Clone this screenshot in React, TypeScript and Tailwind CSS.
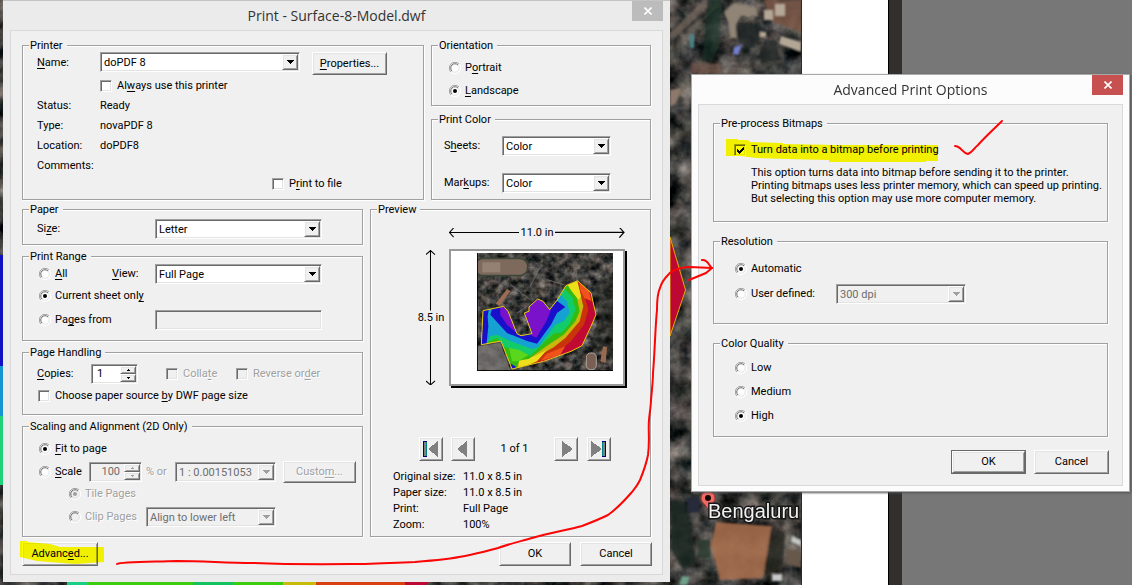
import type { ReactNode } from 'react';
import clsx from 'clsx';

const sunken =
  'border border-t-[#a0a0a0] border-l-[#a0a0a0] border-r-white border-b-white shadow-[inset_1px_1px_0_#696969,inset_-1px_-1px_0_#e3e3e3]';
const raised =
  'border border-t-white border-l-white border-r-[#696969] border-b-[#696969] shadow-[inset_1px_1px_0_#e3e3e3,inset_-1px_-1px_0_#a0a0a0] bg-[#f0f0f0]';
const dimmed = 'text-[#a0a0a0] [text-shadow:1px_1px_0_#fff]';

function Group({ title, className, children }: { title: string; className?: string; children: ReactNode }) {
  return (
    <fieldset className="min-w-0 border border-[#a0a0a0] pl-1.5 shadow-[1px_1px_0_#fff,inset_1px_1px_0_#fff]">
      <legend className="bg-[#f0f0f0] pr-1 pl-px leading-[13px]">{title}</legend>
      <div className={className}>{children}</div>
    </fieldset>
  );
}

interface SelectProps {
  id: string;
  value: string;
  className?: string;
  disabled?: boolean;
  label?: string;
}

function Select({ id, value, className, disabled, label }: SelectProps) {
  return (
    <div className={clsx('relative h-5 shrink-0', className)}>
      <select
        id={id}
        aria-label={label}
        disabled={disabled}
        className={clsx(
          'block h-full w-full appearance-none pt-px pr-5 pl-[3px] opacity-100',
          sunken,
          disabled ? 'bg-[#f0f0f0] text-[#6d6d6d]' : 'bg-white text-black',
        )}
      >
        <option>{value}</option>
      </select>
      <span
        className={clsx('pointer-events-none absolute top-0.5 right-0.5 bottom-0.5 flex w-4 items-center justify-center', raised)}
      >
        <svg width="7" height="4" viewBox="0 0 7 4" shapeRendering="crispEdges">
          <path d="M0 0h7v1h-1v1h-1v1h-1v1h-1v-1h-1v-1h-1v-1h-1z" fill={disabled ? '#a0a0a0' : '#000'} />
        </svg>
      </span>
    </div>
  );
}

interface OptionProps {
  name?: string;
  checked?: boolean;
  disabled?: boolean;
  className?: string;
  children: ReactNode;
}

function Radio({ name, checked, disabled, className, children }: OptionProps) {
  return (
    <label className={clsx('flex items-center gap-1 whitespace-nowrap', disabled && dimmed, className)}>
      <span className="relative block size-3 shrink-0">
        <input
          type="radio"
          name={name}
          defaultChecked={checked}
          disabled={disabled}
          className="block size-3 appearance-none"
        />
        <svg className="pointer-events-none absolute inset-0" width="12" height="12" viewBox="0 0 12 12" fill="none">
          <circle cx="6" cy="6" r="5" fill={disabled ? '#f0f0f0' : '#fff'} />
          <path d="M10 2A5.6 5.6 0 0 1 2 10" stroke="#fff" />
          <path d="M9 3A4.2 4.2 0 0 1 3 9" stroke="#e3e3e3" />
          <path d="M2 10A5.6 5.6 0 0 1 10 2" stroke="#a0a0a0" />
          <path d="M3 9A4.2 4.2 0 0 1 9 3" stroke="#696969" />
          {checked && <circle cx="6" cy="6" r="2" fill={disabled ? '#a0a0a0' : '#000'} />}
        </svg>
      </span>
      <span>{children}</span>
    </label>
  );
}

function Checkbox({ checked, disabled, className, children }: OptionProps) {
  return (
    <label className={clsx('flex items-center gap-[5px] whitespace-nowrap', disabled && dimmed, className)}>
      <span className="relative block size-3 shrink-0">
        <input
          type="checkbox"
          defaultChecked={checked}
          disabled={disabled}
          className={clsx('block size-3 appearance-none', sunken, disabled ? 'bg-[#f0f0f0]' : 'bg-white')}
        />
        {checked && (
          <svg className="pointer-events-none absolute inset-0" width="12" height="12" viewBox="0 0 12 12" shapeRendering="crispEdges">
            <path d="M3 5v3h1v1h1v1h1v-1h1v-1h1v-1h1v-1h1v-3h-1v1h-1v1h-1v1h-1v1h-1v-1h-1v-1z" fill="#000" />
          </svg>
        )}
      </span>
      <span>{children}</span>
    </label>
  );
}

interface ButtonProps {
  className?: string;
  disabled?: boolean;
  label?: string;
  children: ReactNode;
}

function Button({ className, disabled, label, children }: ButtonProps) {
  return (
    <button
      type="button"
      disabled={disabled}
      aria-label={label}
      className={clsx('flex items-center justify-center', raised, disabled && dimmed, className)}
    >
      {children}
    </button>
  );
}

interface SpinnerProps {
  id: string;
  value: string;
  width: string;
  disabled?: boolean;
  label?: string;
}

function Spinner({ id, value, width, disabled, label }: SpinnerProps) {
  const color = disabled ? '#a0a0a0' : '#000';
  return (
    <div className={clsx('flex h-5 shrink-0 p-px', sunken, width, disabled ? 'bg-[#f0f0f0]' : 'bg-white')}>
      <input
        id={id}
        aria-label={label}
        defaultValue={value}
        disabled={disabled}
        className={clsx('w-0 flex-1 bg-transparent', disabled ? 'pr-1 text-right text-[#6d6d6d]' : 'pl-1')}
      />
      <div className="flex w-4 flex-col">
        {['M2 3h1v-1h1v1h1v1h-3z', 'M2 2h3v1h-1v1h-1v-1h-1z'].map((d) => (
          <span key={d} className={clsx('flex h-2 items-center justify-center', raised)}>
            <svg width="7" height="6" viewBox="0 0 7 6" shapeRendering="crispEdges">
              <path d={d} fill={color} />
            </svg>
          </span>
        ))}
      </div>
    </div>
  );
}

function CloseIcon() {
  return (
    <svg width="8" height="8" viewBox="0 0 8 8" stroke="#fff" strokeWidth="1.6">
      <path d="M0.5 0.5 7.5 7.5M7.5 0.5 0.5 7.5" />
    </svg>
  );
}

function AerialFilter({ id, frequency }: { id: string; frequency: number }) {
  return (
    <filter id={id} x="0" y="0" width="100%" height="100%" colorInterpolationFilters="sRGB">
      <feTurbulence type="fractalNoise" baseFrequency={frequency} numOctaves="4" seed="11" />
      <feColorMatrix values=".8 .2 0 0 -.25  .7 .25 0 0 -.23  .65 .25 .05 0 -.24  0 0 0 0 1" />
    </filter>
  );
}

// Satellite picture with the coloured surface, seen behind the dialogs
function MapBackground() {
  return (
    <svg className="h-full w-[802px] shrink-0" width="802" height="585" viewBox="0 0 802 585" preserveAspectRatio="xMinYMin slice">
      <defs>
        <AerialFilter id="aerial" frequency={0.05} />
        <filter id="soft">
          <feGaussianBlur stdDeviation="1" />
        </filter>
      </defs>
      <rect width="802" height="585" filter="url(#aerial)" />
      <g filter="url(#soft)">
        <path d="M670 38 705 4" stroke="#75685f" strokeWidth="7" opacity=".7" />
        <path d="M676 46 716 6" stroke="#6c615a" strokeWidth="2" opacity=".6" />
        <path d="M708 0h14l-2 40-6 20h-12z" fill="#1d3526" opacity=".7" />
        <path d="M724 12 734 3 756 8 758 16 742 15 736 24 737 38 730 38 728 22z" fill="#8f8475" />
        <path d="M738 24h18l8 10-10 12-16-2z" fill="#23282b" opacity=".7" />
        <path d="M764 0h38v32l-30-10z" fill="#7d5646" opacity=".8" />
        <path d="M764 10h9v10h-9zM775 4h10v12h-10zM781 36 801 42v10l-22-8zM760 32h6v5h-6z" fill="#b5a796" />
        <path d="M764 40h12l4 20-20 4z" fill="#1f2524" opacity=".8" />
        <path d="M734 47 742 45 738 55 733 54z" fill="#7480cf" />
        <path d="M690 34h4v14h-4z" fill="#4b8389" />
        <path d="M692 62 720 64 722 74H690z" fill="#79594d" opacity=".6" />
        <path d="M670 90 682 88 676 104 670 106z" fill="#8d7a6c" />
        <path d="M671 500 688 505 696 560 684 570 671 550z" fill="#1b2722" opacity=".8" />
        <path d="M687 498 699 497 700 512 688 513z" fill="#272c3a" />
        <path d="M716 522 772 526 763 578 720 580 711 545z" fill="#a56d4c" opacity=".9" />
        <path d="M771 528 785 532 782 570 764 576z" fill="#272520" opacity=".8" />
        <path d="M792 536 801 540v6l-10-4zM772 574h10v7h-10z" fill="#c5c8c6" />
        <path d="M786 548 801 552v16l-14-4z" fill="#66584c" />
        <path d="M682 576 690 577 687 585h-8z" fill="#6fa08b" />
        <path d="M698 540h12l1 18h-14z" fill="#24372d" opacity=".8" />
      </g>
      <path d="M670 237 685.5 290 670 336z" fill="#bd0834" stroke="#e2ac00" />
      <path d="M0 255h4v111H0z" fill="#1210c4" />
      <path d="M0 366h4v50H0z" fill="#1295d0" />
      <path d="M0 416h4v69H0z" fill="#1ed27a" />
      <g>
        <path d="M67 580h21v5H67z" fill="#18cf83" />
        <path d="M88 580h195v5H88z" fill="#3bcb0f" />
        <path d="M193 580h40v5h-40z" fill="#12c25f" />
        <path d="M283 580h33v5h-33z" fill="#c9bb0a" />
        <path d="M316 580h89v5h-89z" fill="#d8410f" />
        <path d="M405 580h27l-6 5h-21z" fill="#bd0834" />
      </g>
      <path d="M801.5 0V585" stroke="#5d1518" />
      <g>
        <path d="M708 510C706 504 701 503 701 498A7 7 0 0 1 715 498C715 503 710 504 708 510z" fill="#ef6a63" stroke="#a02c2a" />
        <circle cx="708" cy="498" r="3" fill="#1a0606" />
      </g>
      <text
        x="708"
        y="518"
        fill="#f2f2f2"
        stroke="#161616"
        strokeWidth="3"
        paintOrder="stroke"
        className='font-["Liberation_Sans",sans-serif] text-[20px]'
      >
        Bengaluru
      </text>
    </svg>
  );
}

function PreviewPicture() {
  const outline =
    'M108 193 170 180 183 195 210 262 222 268 255 262 232 200 246 195 246 182 272 158 288 165 308 190 330 162 357 118 392 103 432 140 447 205 432 240 405 298 372 315 290 345 195 368 162 284 103 295z';
  return (
    <svg width="136" height="118" viewBox="90 20 408 354" preserveAspectRatio="none">
      <defs>
        <AerialFilter id="aerial-small" frequency={0.04} />
        <clipPath id="surface">
          <path d={outline} />
        </clipPath>
      </defs>
      <rect x="90" y="20" width="408" height="354" filter="url(#aerial-small)" />
      <path d="M90 300 160 290 190 372H90z" fill="#7b7876" opacity=".75" />
      <rect x="84" y="36" width="158" height="52" rx="24" fill="#7d6a5d" stroke="#3c4639" strokeWidth="5" />
      <path d="M106 48h54v30h-54z" fill="#a08c7d" opacity=".7" />
      <path d="M180 128 190 134 158 178 146 172z" fill="#9a6d54" />
      <path d="M190 115 250 160M280 60 250 120M300 100 350 115M210 200 240 180" stroke="#85807a" strokeWidth="3" opacity=".6" />
      <path d="M440 110 498 90V330L430 300 455 210z" fill="#1b1e1b" opacity=".45" />
      <rect x="418" y="320" width="30" height="50" rx="13" fill="#7a5f54" stroke="#aaa49a" strokeWidth="3" />
      <path d="M468 300 480 302 476 350 460 345z" fill="#9a6a4e" />
      <g clipPath="url(#surface)">
        <path d="M90 90H460V380H90z" fill="#c00a33" />
        <path d="M396 95 412 145 424 190 411 235 372 285 335 315 265 350 90 400V90z" fill="#c93508" />
        <path d="M396 95 425 130 434 165 412 155 400 130zM300 322 355 300 340 325 280 345z" fill="#f0521c" />
        <path d="M388 95 398 135 409 180 398 225 355 275 320 303 262 335 215 370 90 400V90z" fill="#c9b70e" />
        <path d="M372 95 391 105 402 150 396 160 370 140 360 115zM215 345 262 330 300 310 270 345 215 368z" fill="#ecdf1c" />
        <path d="M358 110 374 135 390 155 398 195 385 225 350 265 300 298 245 338 217 342 205 380 90 400V90z" fill="#35bb0e" />
        <path d="M185 300 220 310 245 325 215 345 195 345z" fill="#5ad61c" />
        <path d="M350 125 376 152 386 190 368 232 345 258 320 262 300 280 250 328 215 310 185 305 168 300 150 275 90 300V90z" fill="#12cb6b" />
        <path d="M340 145 360 165 368 200 350 225 325 235 275 302 255 308 200 288 150 265 130 270 115 300 90 300V90z" fill="#15a2d2" />
        <path d="M325 160 355 182 330 200 312 235 270 292 240 284 180 260 145 222 130 205 140 170 270 90z" fill="#1a10cc" />
        <path d="M90 180 126 185 122 210 124 240 118 300H90zM180 345 208 362 195 375z" fill="#1a10cc" />
        <path d="M225 200 246 150 290 150 312 190 298 225 268 274 255 268z" fill="#7a12cc" />
        <path d="M160 178 175 178 190 210 212 262 180 235 160 205z" fill="#7a12cc" />
      </g>
      <path d={outline} fill="none" stroke="#e8c713" strokeWidth="3" />
      <path d="M91 20V373H498" fill="none" stroke="#000" strokeWidth="3" />
    </svg>
  );
}

function NavButton({ label, kind }: { label: string; kind: 'first' | 'previous' | 'next' | 'last' }) {
  return (
    <Button label={label} className="size-6">
      <svg width="18" height="18" viewBox="0 0 18 18" shapeRendering="crispEdges">
        {kind === 'first' && (
          <>
            <path d="M1 1h4v16H1z" fill="#000080" />
            <path d="M2 2h2v14H2z" fill="#808080" />
            <path d="M4 2h1v14H4z" fill="#008080" />
            <path d="M16 1V17L6 9z" fill="#808080" />
          </>
        )}
        {kind === 'previous' && <path d="M13 1V17L3 9z" fill="#808080" />}
        {kind === 'next' && <path d="M5 1V17L16 9z" fill="#808080" />}
        {kind === 'last' && (
          <>
            <path d="M1 1V17L12 9z" fill="#808080" />
            <path d="M12 1h4v16h-4z" fill="#000080" />
            <path d="M13 2h2v14h-2z" fill="#808080" />
            <path d="M12 2h1v14h-1z" fill="#008080" />
          </>
        )}
      </svg>
    </Button>
  );
}

function Preview() {
  const info = [
    ['Original size:', '11.0 x 8.5 in'],
    ['Paper size:', '11.0 x 8.5 in'],
    ['Print:', 'Full Page'],
    ['Zoom:', '100%'],
  ];

  return (
    <div className="pt-[9px] pl-[34px]">
      <div className="grid grid-cols-[32px_180px]">
        <div />
        <div className="mb-2 flex h-4 w-[176px] items-center">
          <svg className="flex-1" width="68" height="10" viewBox="0 0 68 10" preserveAspectRatio="xMinYMid slice" fill="none" stroke="#000">
            <path d="M0 4.5H200M4.5 0 0.5 4.5 4.5 9" />
          </svg>
          <span className="px-0.5">11.0 in</span>
          <svg className="flex-1" width="60" height="10" viewBox="0 0 60 10" preserveAspectRatio="xMaxYMid slice" fill="none" stroke="#000">
            <path d="M-100 4.5H60M55.5 0 59.5 4.5 55.5 9" />
          </svg>
        </div>
        <div className="flex w-[28px] flex-col items-center py-px">
          <svg className="flex-1" width="10" height="60" viewBox="0 0 10 60" preserveAspectRatio="xMidYMin slice" fill="none" stroke="#000">
            <path d="M4.5 0V60M0 4.5 4.5 0.5 9 4.5" />
          </svg>
          <span className="whitespace-nowrap">8.5 in</span>
          <svg className="flex-1" width="10" height="60" viewBox="0 0 10 60" preserveAspectRatio="xMidYMax slice" fill="none" stroke="#000">
            <path d="M4.5 0V60M0 55.5 4.5 59.5 9 55.5" />
          </svg>
        </div>
        <div className="h-[137px] w-[176px] border-2 border-[#999] bg-white pt-0.5 pl-[26px] shadow-[2px_2px_0_#000]">
          <PreviewPicture />
        </div>
      </div>
      <div className="mt-[51px] flex items-center pl-0.5">
        <NavButton label="First sheet" kind="first" />
        <div className="w-2" />
        <NavButton label="Previous sheet" kind="previous" />
        <span className="w-[79px] text-center">1 of 1</span>
        <NavButton label="Next sheet" kind="next" />
        <div className="w-[9px]" />
        <NavButton label="Last sheet" kind="last" />
      </div>
      <dl className="mt-2 -ml-6 grid grid-cols-[70px_auto] leading-4">
        {info.map(([term, value]) => (
          <div key={term} className="contents">
            <dt>{term}</dt>
            <dd>{value}</dd>
          </div>
        ))}
      </dl>
    </div>
  );
}

function PrintDialog() {
  return (
    <section className="absolute top-0 left-[3px] w-[667px] border-t border-[#c4c4c4] bg-[#ebebeb] px-[7px] pb-[7px]">
      <header className="relative flex h-[29px] items-center justify-center">
        <h1 className='font-["Open_Sans",sans-serif] text-[14px] text-[#333]'>Print - Surface-8-Model.dwf</h1>
        <button type="button" aria-label="Close" className="absolute top-0 right-0 flex h-5 w-[31px] items-center justify-center bg-[#bcbcbc]">
          <CloseIcon />
        </button>
      </header>

      <div className="border border-[#d9d9d9] bg-[#f0f0f0] px-[11px] pt-2 pb-2">
        <div className="grid grid-cols-[402px_1fr] gap-x-[7px]">
          <Group title="Printer" className="px-2 pb-1">
            <div className="grid grid-cols-[63px_1fr]">
              <label htmlFor="printer" className="pt-1">
                <u>N</u>ame:
              </label>
              <div className="flex items-start justify-between pr-7">
                <Select id="printer" value="doPDF 8" className="w-[200px]" />
                <Button className="h-[23px] w-[75px]">
                  <span>
                    <u>P</u>roperties...
                  </span>
                </Button>
              </div>
              <div />
              <Checkbox className="h-[21px]">
                Al<u>w</u>ays use this printer
              </Checkbox>
            </div>
            <dl className="grid grid-cols-[63px_1fr] leading-5">
              <dt>Status:</dt>
              <dd>Ready</dd>
              <dt>Type:</dt>
              <dd>novaPDF 8</dd>
              <dt>Location:</dt>
              <dd>doPDF8</dd>
              <dt>Comments:</dt>
              <dd />
            </dl>
            <Checkbox className="h-4 pl-[235px]">
              P<u>r</u>int to file
            </Checkbox>
          </Group>

          <div className="flex flex-col gap-[7px]">
            <Group title="Orientation" className="pt-1 pb-[3px] pl-[11px]">
              <Radio name="orientation" className="h-6">
                P<u>o</u>rtrait
              </Radio>
              <Radio name="orientation" checked className="h-[22px]">
                <u>L</u>andscape
              </Radio>
            </Group>
            <Group title="Print Color" className="flex flex-col gap-[17px] pt-2.5 pb-1.5 pl-1.5">
              <div className="grid grid-cols-[58px_1fr] items-center">
                <label htmlFor="sheets">
                  S<u>h</u>eets:
                </label>
                <Select id="sheets" value="Color" className="w-[109px]" />
              </div>
              <div className="grid grid-cols-[58px_1fr] items-center">
                <label htmlFor="markups">
                  Mar<u>k</u>ups:
                </label>
                <Select id="markups" value="Color" className="w-[109px]" />
              </div>
            </Group>
          </div>
        </div>

        <div className="mt-[3px] grid grid-cols-[341px_1fr] gap-x-[7px]">
          <div className="flex flex-col gap-[5px]">
            <Group title="Paper" className="px-2 pt-[3px] pb-[5px]">
              <div className="grid grid-cols-[118px_1fr] items-center">
                <label htmlFor="size">
                  Si<u>z</u>e:
                </label>
                <Select id="size" value="Letter" className="w-[167px]" />
              </div>
            </Group>

            <Group title="Print Range" className="px-2 pt-px pb-2">
              <div className="grid grid-cols-[75px_43px_1fr] items-center">
                <Radio name="range" className="pl-0.5">
                  <u>A</u>ll
                </Radio>
                <label htmlFor="view">
                  <u>V</u>iew:
                </label>
                <Select id="view" value="Full Page" className="w-[167px]" />
              </div>
              <Radio name="range" checked className="h-6 pl-0.5">
                Current sheet onl<u>y</u>
              </Radio>
              <div className="grid h-6 grid-cols-[118px_1fr] items-center">
                <Radio name="range" className="pl-0.5">
                  Pa<u>g</u>es from
                </Radio>
                <input aria-label="Pages" disabled className={clsx('h-5 w-[167px] bg-[#f0f0f0] px-1', sunken)} />
              </div>
            </Group>

            <Group title="Page Handling" className="px-2 pt-1 pb-[7px]">
              <div className="flex h-[22px] items-center">
                <label htmlFor="copies" className="w-[54px]">
                  <u>C</u>opies:
                </label>
                <Spinner id="copies" value="1" width="w-[47px]" />
                <Checkbox disabled className="ml-7 w-[70px]">
                  Colla<u>t</u>e
                </Checkbox>
                <Checkbox disabled>
                  Reverse or<u>d</u>er
                </Checkbox>
              </div>
              <Checkbox className="h-[22px] pl-px">
                Choose paper source <u>b</u>y DWF page size
              </Checkbox>
            </Group>

            <Group title="Scaling and Alignment (2D Only)" className="pt-1 pb-[7px] pl-2.5">
              <Radio name="fit" checked className="h-6">
                <u>F</u>it to page
              </Radio>
              <div className="flex h-[22px] items-center">
                <Radio name="fit" className="w-[50px]">
                  <u>S</u>cale
                </Radio>
                <Spinner id="percent" label="Scale percent" value="100" width="w-[53px]" disabled />
                <span className={clsx('w-[33px] pl-1', dimmed)}>% or</span>
                <Select id="ratio" label="Scale ratio" value="1 : 0.00151053" className="w-[101px]" disabled />
                <Button disabled className="ml-[7px] h-[22px] w-[73px]">
                  <span>
                    Custo<u>m</u>...
                  </span>
                </Button>
              </div>
              <Radio name="tiling" checked disabled className="h-[22px] pl-[30px]">
                Tile Pages
              </Radio>
              <div className="flex h-6 items-center">
                <Radio name="tiling" disabled className="w-[107px] pl-[30px]">
                  Clip Pages
                </Radio>
                <Select id="align" label="Alignment" value="Align to lower left" className="w-[130px]" disabled />
              </div>
            </Group>
          </div>

          <Group title="Preview" className="pl-1.5">
            <Preview />
          </Group>
        </div>

        <footer className="-mr-px mt-[5px] flex gap-[9px]">
          <div className="relative mr-auto">
            <Button className="h-6 w-[76px]">
              <span>
                Advanc<u>e</u>d...
              </span>
            </Button>
            <svg className="pointer-events-none absolute -top-px -left-0.5 mix-blend-multiply" width="84" height="24" viewBox="0 0 84 24">
              <path d="M0 0H7V1L30 3 40 6H84V21L55 23 17 20 0 16z" fill="#ffff00" />
            </svg>
          </div>
          <Button className="h-6 w-[72px]">OK</Button>
          <Button className="h-6 w-[72px]">Cancel</Button>
        </footer>
      </div>
    </section>
  );
}

function AdvancedDialog() {
  return (
    <section className="absolute top-[74px] left-[691px] w-[439px] border border-[#a8a8a8] bg-[#fcfcfc] px-1.5 pb-[5px] shadow-[1px_1px_2px_#555]">
      <header className="relative flex h-[29px] items-center justify-center">
        <h2 className='font-["Open_Sans",sans-serif] text-[14px] text-[#333]'>Advanced Print Options</h2>
        <button type="button" aria-label="Close" className="absolute top-0 right-0 flex h-5 w-[31px] items-center justify-center bg-[#c75050]">
          <CloseIcon />
        </button>
      </header>

      <div className="border border-[#d9d9d9] bg-[#f0f0f0] pt-3 pr-[13px] pb-[11px] pl-3.5">
        <div className="flex flex-col gap-[13px] pr-px">
          <Group title="Pre-process Bitmaps" className="pt-2.5 pb-4 pl-3.5">
            <div className="relative">
              <Checkbox checked className="h-5">
                Turn data into a bitmap before printing
              </Checkbox>
              <svg className="pointer-events-none absolute -top-px -left-2 mix-blend-multiply" width="212" height="24" viewBox="0 0 212 24">
                <path d="M0 0H12V1L22 1 24 3 57 4V5L110 6H212V22H200V23H103V21L60 20 30 19 15 17H0z" fill="#ffff00" />
              </svg>
            </div>
            <p className="mt-1.5 pl-[17px] leading-[13px] whitespace-nowrap">
              This option turns data into bitmap before sending it to the printer.
              <br />
              Printing bitmaps uses less printer memory, which can speed up printing.
              <br />
              But selecting this option may use more computer memory.
            </p>
          </Group>

          <Group title="Resolution" className="pt-[9px] pb-4 pl-[15px]">
            <Radio name="resolution" checked className="h-6">
              Automatic
            </Radio>
            <div className="flex h-[26px] items-center">
              <Radio name="resolution" className="w-[101px]">
                User defined:
              </Radio>
              <Select id="dpi" label="Resolution" value="300 dpi" className="w-[130px]" disabled />
            </div>
          </Group>

          <Group title="Color Quality" className="pt-1.5 pb-2 pl-[15px]">
            <Radio name="quality" className="h-6">
              Low
            </Radio>
            <Radio name="quality" className="h-6">
              Medium
            </Radio>
            <Radio name="quality" checked className="h-6">
              High
            </Radio>
          </Group>
        </div>

        <footer className="mt-[13px] flex justify-end gap-2">
          <span className="flex border border-[#696969]">
            <Button className="h-[22px] w-[73px]">OK</Button>
          </span>
          <Button className="h-6 w-[75px]">Cancel</Button>
        </footer>
      </div>
    </section>
  );
}

// Red pen strokes that lead from the Advanced button to the second dialog
function PenMarks() {
  return (
    <svg
      className="pointer-events-none absolute top-0 left-0"
      width="1132"
      height="585"
      viewBox="0 0 1132 585"
      fill="none"
      stroke="#fb0505"
      strokeWidth="2"
      strokeLinecap="round"
      strokeLinejoin="round"
    >
      <path d="M117 564C120 562 143 562 177 561C205 561 225 563 253 563C300 565 345 564 365 564C385 563 395 563 415 562C440 560 455 558 465 556C480 553 490 550 498 548C512 543 522 541 532 538C550 533 567 530 582 526C595 521 600 519 608 515C618 508 625 500 632 492C638 484 637 486 640 480C645 468 647 460 648 455C650 440 648 430 649 420C650 410 651 405 651 400C652 390 653 380 653 373C655 350 655 330 657 310C657 300 658 292 660 288C662 281 665 278 668 275C671 271 675 270 678 269C683 267 687 267 690 267L712 268" />
      <path d="M702 260C708 259 708 265 712 268L706 273 689 280" />
      <path d="M955 146C961 146 962 153 968 154C973 152 974 148 978 145C985 137 993 130 1002 121" />
    </svg>
  );
}

export default function App() {
  return (
    <main className='relative min-h-screen overflow-hidden bg-[#777] font-["Roboto",sans-serif] text-[11px] leading-[14px] text-black [&_u]:underline-offset-2'>
      <div className="absolute inset-0 flex">
        <MapBackground />
        <div className="w-[86px] shrink-0 bg-white" />
        <div className="w-3.5 shrink-0 border-l border-black bg-[#31302e]" />
        <div className="flex-1 bg-[#777]" />
      </div>
      <PrintDialog />
      <AdvancedDialog />
      <PenMarks />
    </main>
  );
}
